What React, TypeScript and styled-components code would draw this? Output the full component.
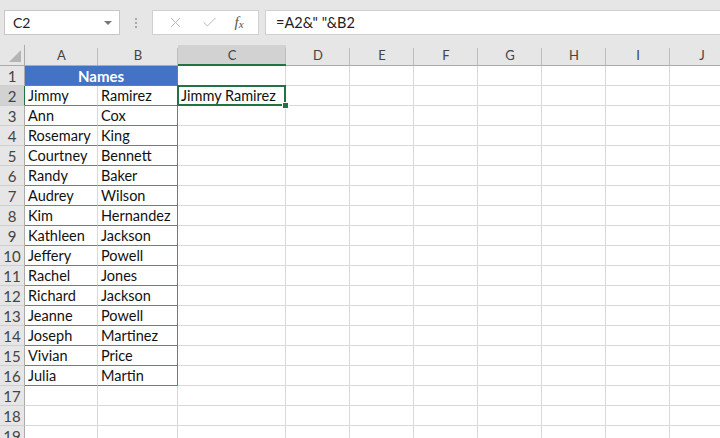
import React from 'react';
import styled, { createGlobalStyle } from 'styled-components';
import { X, Check } from 'lucide-react';

const GlobalStyle = createGlobalStyle`
  html, body {
    margin: 0;
    padding: 0;
    background: #ffffff;
    overflow: hidden;
  }
  body {
    font-family: Lato, 'Noto Sans', sans-serif;
  }
`;

const GREEN = '#217346';
const TABLE_LINE = '#5b7db8';
const GRID = '#d9d9d9';

const COLUMNS = ['A', 'B', 'C', 'D', 'E', 'F', 'G', 'H', 'I', 'J'];
const WIDTHS = [73, 80, 108, 64, 64, 64, 64, 64, 64, 64];

const PEOPLE: [string, string][] = [
  ['Jimmy', 'Ramirez'],
  ['Ann', 'Cox'],
  ['Rosemary', 'King'],
  ['Courtney', 'Bennett'],
  ['Randy', 'Baker'],
  ['Audrey', 'Wilson'],
  ['Kim', 'Hernandez'],
  ['Kathleen', 'Jackson'],
  ['Jeffery', 'Powell'],
  ['Rachel', 'Jones'],
  ['Richard', 'Jackson'],
  ['Jeanne', 'Powell'],
  ['Joseph', 'Martinez'],
  ['Vivian', 'Price'],
  ['Julia', 'Martin'],
];

const Window = styled.div`
  width: 720px;
  height: 438px;
  overflow: hidden;
  background: #e6e6e6;
`;

const FormulaBar = styled.div`
  display: flex;
  height: 25px;
  padding: 10px 0 10px 4px;
`;

const NameBox = styled.div`
  box-sizing: border-box;
  width: 116px;
  display: flex;
  align-items: center;
  justify-content: space-between;
  padding: 0 7px 0 8px;
  background: #fff;
  border: 1px solid #c6c6c6;
  font-size: 14px;
  color: #222;
`;

const Caret = styled.span`
  width: 0;
  height: 0;
  border-left: 4px solid transparent;
  border-right: 4px solid transparent;
  border-top: 4px solid #777;
`;

const Grip = styled.div`
  width: 32px;
  display: flex;
  flex-direction: column;
  align-items: center;
  justify-content: center;
  gap: 2px;

  span {
    width: 2px;
    height: 2px;
    background: #a8a8a8;
  }
`;

const ButtonBox = styled.div`
  box-sizing: border-box;
  width: 107px;
  display: flex;
  align-items: center;
  justify-content: space-around;
  padding: 0 6px;
  background: #fff;
  border: 1px solid #d0d0d0;
  color: #b8b8b8;
`;

const Fx = styled.span`
  font-family: 'Liberation Serif', serif;
  font-style: italic;
  font-size: 15px;
  color: #555;

  sub {
    font-size: 11px;
    vertical-align: -1px;
  }
`;

const FormulaInput = styled.div`
  box-sizing: border-box;
  flex: 1;
  margin-left: 6px;
  display: flex;
  align-items: center;
  padding-left: 10px;
  background: #fff;
  border: 1px solid #d0d0d0;
  border-right: none;
  font-size: 14.5px;
  color: #222;
`;

const Sheet = styled.div`
  display: grid;
  grid-template-columns: 25px ${WIDTHS.map((w) => `${w}px`).join(' ')};
  grid-template-rows: 21px;
  grid-auto-rows: 20px;
  background: #fff;
`;

const Corner = styled.div`
  position: relative;
  background: #e6e6e6;
  border-right: 1px solid #ababab;
  border-bottom: 1px solid #ababab;

  svg {
    position: absolute;
    right: 3px;
    bottom: 3px;
  }
`;

const ColHeader = styled.div<{ $active?: boolean }>`
  box-sizing: border-box;
  display: flex;
  align-items: center;
  justify-content: center;
  background: ${({ $active }) => ($active ? '#d2d2d2' : '#e6e6e6')};
  border-bottom: ${({ $active }) => ($active ? `2px solid ${GREEN}` : '1px solid #ababab')};
  font-size: 13px;
  color: #444;
  position: relative;

  &::after {
    content: '';
    position: absolute;
    right: 0;
    top: 3px;
    bottom: 0;
    width: 1px;
    background: #bdbdbd;
  }
`;

const RowHeader = styled.div<{ $active?: boolean }>`
  box-sizing: border-box;
  display: flex;
  align-items: center;
  justify-content: center;
  background: ${({ $active }) => ($active ? '#d2d2d2' : '#e6e6e6')};
  border-right: 1px solid ${({ $active }) => ($active ? GREEN : '#ababab')};
  border-bottom: 1px solid #cfcfcf;
  font-size: 15px;
  color: #444;
`;

const Cell = styled.div<{ $bottom?: string; $right?: string }>`
  box-sizing: border-box;
  padding: 0 2px 0 3px;
  line-height: 20px;
  font-size: 14.5px;
  color: #111;
  white-space: nowrap;
  border-bottom: 1px solid ${({ $bottom }) => $bottom || GRID};
  border-right: 1px solid ${({ $right }) => $right || GRID};
`;

const TitleCell = styled.div`
  grid-column: span 2;
  box-sizing: border-box;
  background: #4472c4;
  border-bottom: 1px solid ${TABLE_LINE};
  border-right: 1px solid ${TABLE_LINE};
  color: #fff;
  font-weight: 700;
  font-size: 15px;
  line-height: 20px;
  text-align: center;
`;

const ActiveCell = styled(Cell)`
  position: relative;
  z-index: 2;

  &::before {
    content: '';
    position: absolute;
    top: -1px;
    left: -1px;
    right: -1px;
    bottom: -1px;
    border: 2px solid ${GREEN};
  }

  &::after {
    content: '';
    position: absolute;
    right: -4px;
    bottom: -4px;
    width: 5px;
    height: 5px;
    background: ${GREEN};
    border: 1px solid #fff;
  }
`;

const TOTAL_ROWS = 19;

export default function App() {
  const rows: React.ReactNode[] = [];

  for (let r = 1; r <= TOTAL_ROWS; r++) {
    rows.push(
      <RowHeader key={`h${r}`} $active={r === 2}>
        {r}
      </RowHeader>
    );
    COLUMNS.forEach((col, i) => {
      const key = `${col}${r}`;
      if (r === 1) {
        if (i === 0) rows.push(<TitleCell key={key}>Names</TitleCell>);
        else if (i > 1) rows.push(<Cell key={key} />);
        return;
      }
      const person = PEOPLE[r - 2];
      if (person && i < 2) {
        rows.push(
          <Cell
            key={key}
            $bottom={TABLE_LINE}
            $right={i === 1 ? TABLE_LINE : undefined}
          >
            {person[i]}
          </Cell>
        );
        return;
      }
      if (r === 2 && col === 'C') {
        rows.push(<ActiveCell key={key}>Jimmy Ramirez</ActiveCell>);
        return;
      }
      rows.push(<Cell key={key} />);
    });
  }

  return (
    <>
      <GlobalStyle />
      <Window>
        <FormulaBar>
          <NameBox>
            C2
            <Caret />
          </NameBox>
          <Grip>
            <span />
            <span />
            <span />
          </Grip>
          <ButtonBox>
            <X size={17} strokeWidth={1.4} />
            <Check size={17} strokeWidth={1.4} />
            <Fx>
              f<sub>x</sub>
            </Fx>
          </ButtonBox>
          <FormulaInput>=A2&amp;" "&amp;B2</FormulaInput>
        </FormulaBar>
        <Sheet>
          <Corner>
            <svg width="12" height="12" viewBox="0 0 12 12">
              <polygon points="12,0 12,12 0,12" fill="#b4b4b4" />
            </svg>
          </Corner>
          {COLUMNS.map((col) => (
            <ColHeader key={col} $active={col === 'C'}>
              {col}
            </ColHeader>
          ))}
          {rows}
        </Sheet>
      </Window>
    </>
  );
}
